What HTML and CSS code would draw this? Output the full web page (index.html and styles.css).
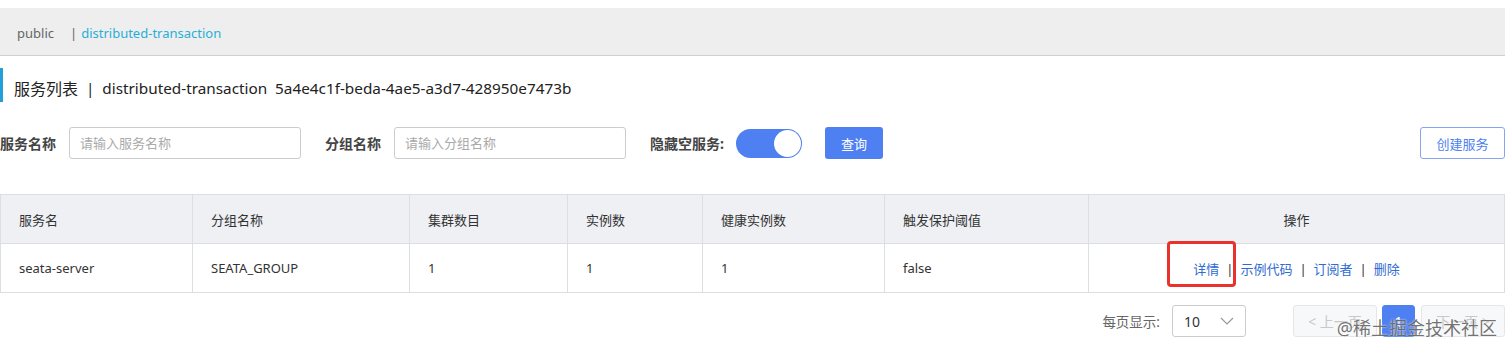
FILE: index.html
```html
<!DOCTYPE html>
<html lang="zh">
<head>
    <meta charset="UTF-8">
    <title>服务列表</title>
    <link rel="stylesheet" href="styles.css">
</head>
<body>

<div class="page">
    <div class="ns-bar">
        <span class="ns-item">public</span>
        <span class="ns-sep">|</span>
        <span class="ns-item active">distributed-transaction</span>
    </div>

    <div class="page-title"><span class="title-cn">服务列表</span>&nbsp;&nbsp;|&nbsp;&nbsp;distributed-transaction&nbsp;&nbsp;5a4e4c1f-beda-4ae5-a3d7-428950e7473b</div>

    <div class="search-row">
        <label class="field-label">服务名称</label>
        <input class="field-input" type="text" placeholder="请输入服务名称">
        <label class="field-label second">分组名称</label>
        <input class="field-input" type="text" placeholder="请输入分组名称">
        <label class="field-label third">隐藏空服务:</label>
        <span class="switch"><span class="knob"></span></span>
        <button class="btn-primary">查询</button>
        <span class="spacer"></span>
        <button class="btn-outline">创建服务</button>
    </div>

    <table class="svc-table">
        <colgroup>
            <col style="width:192px">
            <col style="width:217px">
            <col style="width:158px">
            <col style="width:135px">
            <col style="width:182px">
            <col style="width:204px">
            <col>
        </colgroup>
        <thead>
            <tr>
                <th>服务名</th>
                <th>分组名称</th>
                <th>集群数目</th>
                <th>实例数</th>
                <th>健康实例数</th>
                <th>触发保护阈值</th>
                <th class="center">操作</th>
            </tr>
        </thead>
        <tbody>
            <tr>
                <td>seata-server</td>
                <td>SEATA_GROUP</td>
                <td>1</td>
                <td>1</td>
                <td>1</td>
                <td>false</td>
                <td class="center ops">
                    <span class="mark-wrap"><a>详情</a><span class="mark"></span></span><span class="bar">|</span><a>示例代码</a><span class="bar">|</span><a>订阅者</a><span class="bar">|</span><a>删除</a>
                </td>
            </tr>
        </tbody>
    </table>

    <div class="pager">
        <span class="pager-label">每页显示:</span>
        <span class="page-size">10
            <svg width="14" height="8" viewBox="0 0 14 8"><path d="M1 1 L7 7 L13 1" fill="none" stroke="#999" stroke-width="1.2"/></svg>
        </span>
        <span class="page-btn prev">&lt; 上一页</span>
        <span class="page-btn current">1</span>
        <span class="page-btn next">下一页 &gt;</span>
        <span class="watermark">@稀土掘金技术社区</span>
    </div>
</div>

</body>
</html>
```

FILE: styles.css
```css
body {
    margin: 0;
    padding: 0;
    background: #fff;
    font-family: "Noto Sans", "Noto Sans CJK SC", sans-serif;
    font-size: 13px;
    color: #333;
}

.page {
    width: 1505px;
    padding-top: 8px;
}

.ns-bar {
    height: 48px;
    background: #eeeeee;
    border-bottom: 1px solid #cfcfcf;
    display: flex;
    align-items: center;
    padding-left: 17px;
    box-sizing: border-box;
    font-size: 13px;
    padding-top: 2px;
}

.ns-item {
    color: #666;
}

.ns-item.active {
    color: #28aed6;
}

.ns-sep {
    color: #666;
    margin: 0 4px 0 16px;
}

.page-title {
    margin-top: 12px;
    height: 34px;
    box-sizing: border-box;
    border-left: 3px solid #239fd9;
    padding: 6px 0 0 11px;
    display: flex;
    align-items: center;
    font-size: 15.3px;
    color: #222;
}

.title-cn {
    font-size: 16px;
}

.search-row {
    margin-top: 25px;
    display: flex;
    align-items: center;
    height: 32px;
}

.field-label {
    font-weight: bold;
    color: #444;
    font-size: 14px;
    margin-right: 13px;
}

.field-label.second {
    margin-left: 24px;
}

.field-label.third {
    margin-left: 24px;
    margin-right: 12px;
}

.field-input {
    width: 232px;
    height: 32px;
    box-sizing: border-box;
    border: 1px solid #ccc;
    border-radius: 3px;
    padding: 0 10px;
    font-family: inherit;
    font-size: 13px;
}

.field-input::placeholder {
    color: #aaa;
}

.switch {
    width: 66px;
    height: 29px;
    border-radius: 15px;
    background: #4e80f1;
    position: relative;
}

.switch .knob {
    position: absolute;
    right: 1px;
    top: 1px;
    width: 27px;
    height: 27px;
    border-radius: 50%;
    background: #fff;
}

.btn-primary {
    margin-left: 23px;
    width: 58px;
    height: 32px;
    border: none;
    border-radius: 3px;
    background: #4f80f1;
    color: #fff;
    font-family: inherit;
    font-size: 13px;
}

.spacer {
    flex: 1;
}

.btn-outline {
    width: 85px;
    height: 32px;
    border: 1px solid #86a5f0;
    border-radius: 3px;
    background: #fff;
    color: #4e7ff0;
    font-family: inherit;
    font-size: 13px;
}

.svc-table {
    margin-top: 35px;
    width: 1505px;
    border-collapse: collapse;
    table-layout: fixed;
    border: 1px solid #dcdee2;
}

.svc-table th,
.svc-table td {
    border: 1px solid #dcdee2;
    height: 49px;
    padding: 0 18px;
    text-align: left;
    font-weight: normal;
    font-size: 13px;
    color: #333;
    box-sizing: border-box;
}

.svc-table th {
    background: #eef0f3;
}

.svc-table .center {
    text-align: center;
}

.ops a {
    color: #2f6bd2;
}

.ops .bar {
    color: #333;
    margin: 0 7px;
}

.mark-wrap {
    position: relative;
}

.mark {
    position: absolute;
    left: -26px;
    top: -19px;
    width: 63px;
    height: 40px;
    border: 3px solid #e8322b;
    border-radius: 4px;
}

.pager {
    margin-top: 12px;
    display: flex;
    align-items: center;
    justify-content: flex-end;
    height: 32px;
    position: relative;
}

.pager-label {
    color: #666;
    font-size: 13.5px;
    margin-right: 12px;
}

.page-size {
    width: 74px;
    height: 32px;
    box-sizing: border-box;
    border: 1px solid #ccc;
    border-radius: 3px;
    display: flex;
    align-items: center;
    justify-content: space-between;
    padding: 0 11px;
    font-size: 14px;
    color: #333;
    margin-right: 47px;
}

.page-btn {
    height: 32px;
    box-sizing: border-box;
    display: flex;
    align-items: center;
    justify-content: center;
    border: 1px solid #e6e6e6;
    border-radius: 3px;
    background: #f7f8fa;
    color: #c8c8c8;
    font-size: 14px;
}

.page-btn.prev,
.page-btn.next {
    width: 84px;
}

.page-btn.current {
    width: 33px;
    margin: 0 6px 0 5px;
    background: #4f80f1;
    border-color: #4f80f1;
    color: #fff;
}

.watermark {
    position: absolute;
    right: 8px;
    top: 9px;
    font-size: 18px;
    color: rgba(90, 90, 90, 0.85);
    text-shadow: 0 0 2px #fff;
}
```
